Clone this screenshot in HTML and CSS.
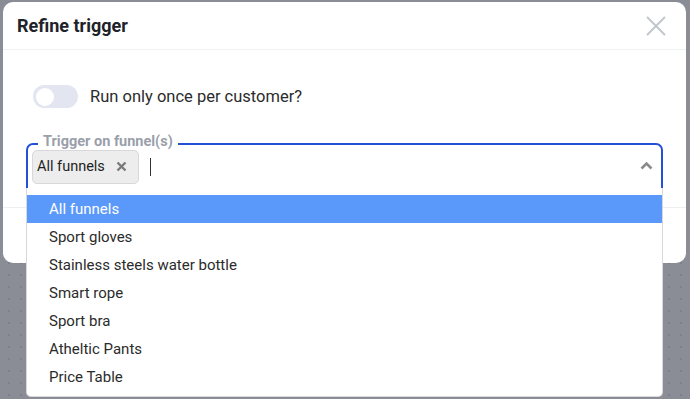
FILE: index.html
```html
<!DOCTYPE html>
<html lang="en">
<head>
    <meta charset="UTF-8">
    <meta name="viewport" content="width=device-width, initial-scale=1.0">
    <title>Refine trigger</title>
    <link rel="stylesheet" href="styles.css">
</head>
<body>
    <div class="modal">
        <div class="modal-header">
            <h2>Refine trigger</h2>
            <button class="close" aria-label="Close">
                <svg width="20" height="20" viewBox="0 0 20 20">
                    <path d="M1 1 L19 19 M19 1 L1 19" stroke="#c3c6cf" stroke-width="2" fill="none"/>
                </svg>
            </button>
        </div>

        <div class="modal-body">
            <label class="toggle-row">
                <span class="toggle"><span class="knob"></span></span>
                <span>Run only once per customer?</span>
            </label>

            <div class="field">
                <span class="field-label">Trigger on funnel(s)</span>
                <span class="chip">
                    All funnels
                    <svg class="chip-x" width="11" height="11" viewBox="0 0 11 11">
                        <path d="M1.5 1.5 L9.5 9.5 M9.5 1.5 L1.5 9.5" stroke="#7a7a7a" stroke-width="2.4" fill="none"/>
                    </svg>
                </span>
                <span class="caret"></span>
                <svg class="chevron" width="13" height="9" viewBox="0 0 13 9">
                    <path d="M1.5 7.5 L6.5 2.5 L11.5 7.5" stroke="#8a8a8a" stroke-width="2.6" fill="none"/>
                </svg>

                <ul class="options">
                    <li class="active">All funnels</li>
                    <li>Sport gloves</li>
                    <li>Stainless steels water bottle</li>
                    <li>Smart rope</li>
                    <li>Sport bra</li>
                    <li>Atheltic Pants</li>
                    <li>Price Table</li>
                </ul>
            </div>
        </div>

        <div class="modal-footer"></div>
    </div>
</body>
</html>
```

FILE: styles.css
```css
body {
    margin: 0;
    font-family: Roboto, "Liberation Sans", sans-serif;
    background-color: #8a8d96;
    background-image: radial-gradient(circle, #7e818a 1px, transparent 1.5px);
    background-size: 12px 12px;
    background-position: 3px 5px;
    height: 399px;
    overflow: hidden;
}

.modal {
    margin: 2px 0 0 3px;
    width: 683px;
    background: #fff;
    border-radius: 10px;
}

.modal-header {
    display: flex;
    align-items: center;
    justify-content: space-between;
    height: 47px;
    padding: 0 20px 0 14px;
    border-bottom: 1px solid #f0f1f3;
}

.modal-header h2 {
    margin: 0;
    font-size: 18px;
    font-weight: bold;
    color: #1e2229;
}

.close {
    border: none;
    background: none;
    padding: 0;
    display: flex;
    margin-top: 1px;
}

.modal-body {
    padding: 35px 23px 17px 23px;
}

.toggle-row {
    display: flex;
    align-items: center;
    gap: 12px;
    margin-left: 7px;
    font-size: 16.5px;
    color: #2b2b2b;
}

.toggle {
    position: relative;
    width: 45px;
    height: 23px;
    border-radius: 12px;
    background: #e3e5f1;
}

.toggle .knob {
    position: absolute;
    left: 3px;
    top: 2.5px;
    width: 18px;
    height: 18px;
    border-radius: 50%;
    background: #fff;
}

.field {
    position: relative;
    margin-top: 35px;
    display: flex;
    align-items: center;
    height: 43px;
    padding: 0 8px 0 4px;
    border: 2px solid #2450d8;
    border-radius: 7px 7px 0 0;
}

.field-label {
    position: absolute;
    top: -12px;
    left: 10px;
    padding: 0 5px;
    background: #fff;
    font-size: 14.5px;
    font-weight: bold;
    color: #9a9fab;
}

.chip {
    display: flex;
    align-items: center;
    gap: 11px;
    height: 32px;
    padding: 0 11px 0 4px;
    background: #ededed;
    border: 1px solid #d8d8d8;
    border-radius: 5px;
    font-size: 14.5px;
    color: #1f1f1f;
}

.caret {
    width: 1px;
    height: 18px;
    margin-left: 11px;
    background: #333;
}

.chevron {
    margin-left: auto;
    margin-top: -2px;
}

.options {
    position: absolute;
    top: 100%;
    left: -2px;
    right: -2px;
    margin: 0;
    padding: 7px 0 5px;
    list-style: none;
    background: #fff;
    border: 1px solid #d6d8dc;
    border-top: none;
    border-radius: 0 0 5px 5px;
}

.options li {
    height: 28px;
    line-height: 28px;
    padding-left: 22px;
    font-size: 15px;
    color: #2b2b2b;
}

.options li.active {
    background: #5a98fa;
    color: #fff;
}

.modal-footer {
    height: 55px;
    border-top: 1px solid #eeeff1;
}
```
